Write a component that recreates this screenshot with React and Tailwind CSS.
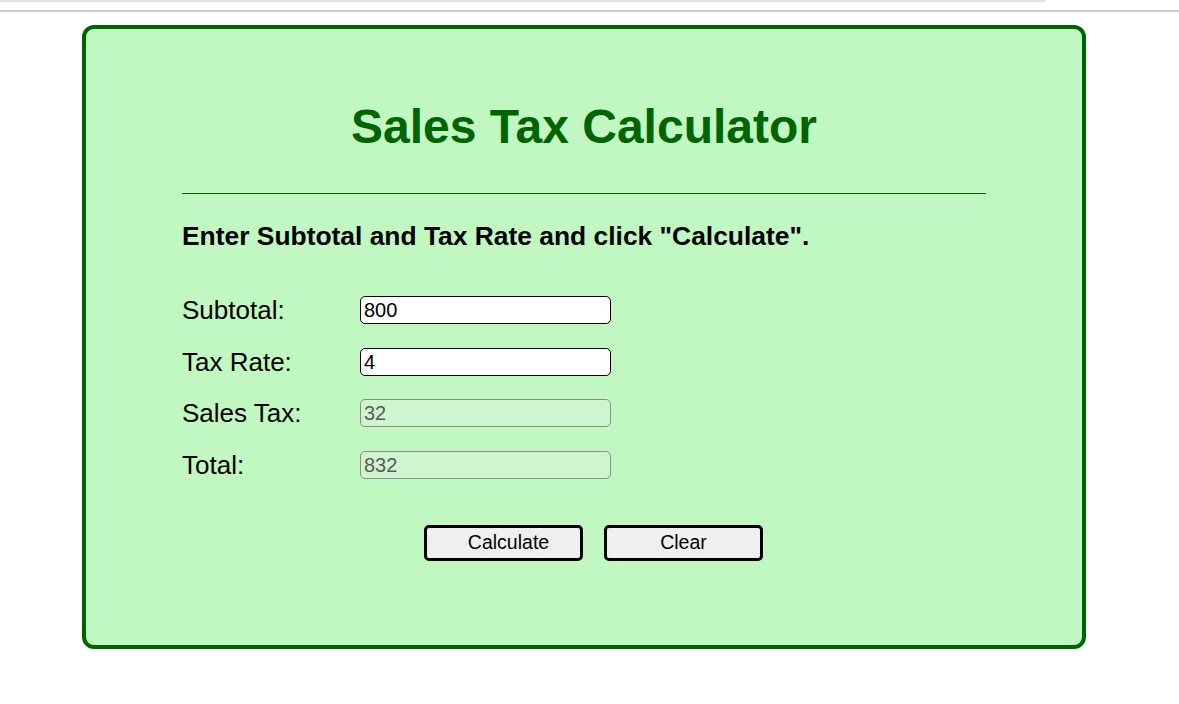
export default function App() {
  return (
    <div className="min-h-screen bg-white font-['Liberation_Sans',Arial,sans-serif]">
      {/* barras superiores */}
      <div className="h-[2px] w-[1045px] bg-[#e3e3e3]" />
      <div className="mt-[8px] h-[2px] w-full bg-[#cccccc]" />

      <div className="ml-[82px] mt-[13px] w-[1004px] rounded-[12px] border-4 border-[#006400] bg-[#c1f7c1] px-[96px] pt-[70px] pb-[84px]">
        <h1 className="text-center text-[48px] font-bold leading-[55px] text-[#006400]">
          Sales Tax Calculator
        </h1>
        <hr className="mt-[39px] border-t border-[#006400]" />
        <p className="mt-[27px] text-[26.4px] font-bold leading-[30px] text-black">
          Enter Subtotal and Tax Rate and click "Calculate".
        </p>

        <div className="mt-[45px] flex flex-col gap-[23.7px]">
          {[
            ['Subtotal:', '800', false],
            ['Tax Rate:', '4', false],
            ['Sales Tax:', '32', true],
            ['Total:', '832', true],
          ].map(([label, value, disabled]) => (
            <div key={label} className="flex h-[28px] items-center">
              <span className="w-[178px] text-[26px] leading-[28px] text-black">{label}</span>
              <input
                readOnly
                disabled={disabled}
                defaultValue={value}
                className={
                  disabled
                    ? 'h-[28px] w-[251px] rounded-[5px] border border-[#8c8c8c] bg-[#cff5cf] px-[3px] text-[20px] text-[#5a5a5a]'
                    : 'h-[28px] w-[251px] rounded-[5px] border border-black bg-white px-[3px] text-[20px] text-black'
                }
              />
            </div>
          ))}
        </div>

        <div className="mt-[46px] flex justify-center gap-[21px] pl-[19px]">
          <button className="h-[36px] w-[159px] shrink-0 rounded-[5px] border-[3px] border-black bg-[#efefef] pl-[10px] text-[19.5px] text-black">
            Calculate
          </button>
          <button className="h-[36px] w-[159px] shrink-0 rounded-[5px] border-[3px] border-black bg-[#efefef] text-[19.5px] text-black">
            Clear
          </button>
        </div>
      </div>
    </div>
  );
}
